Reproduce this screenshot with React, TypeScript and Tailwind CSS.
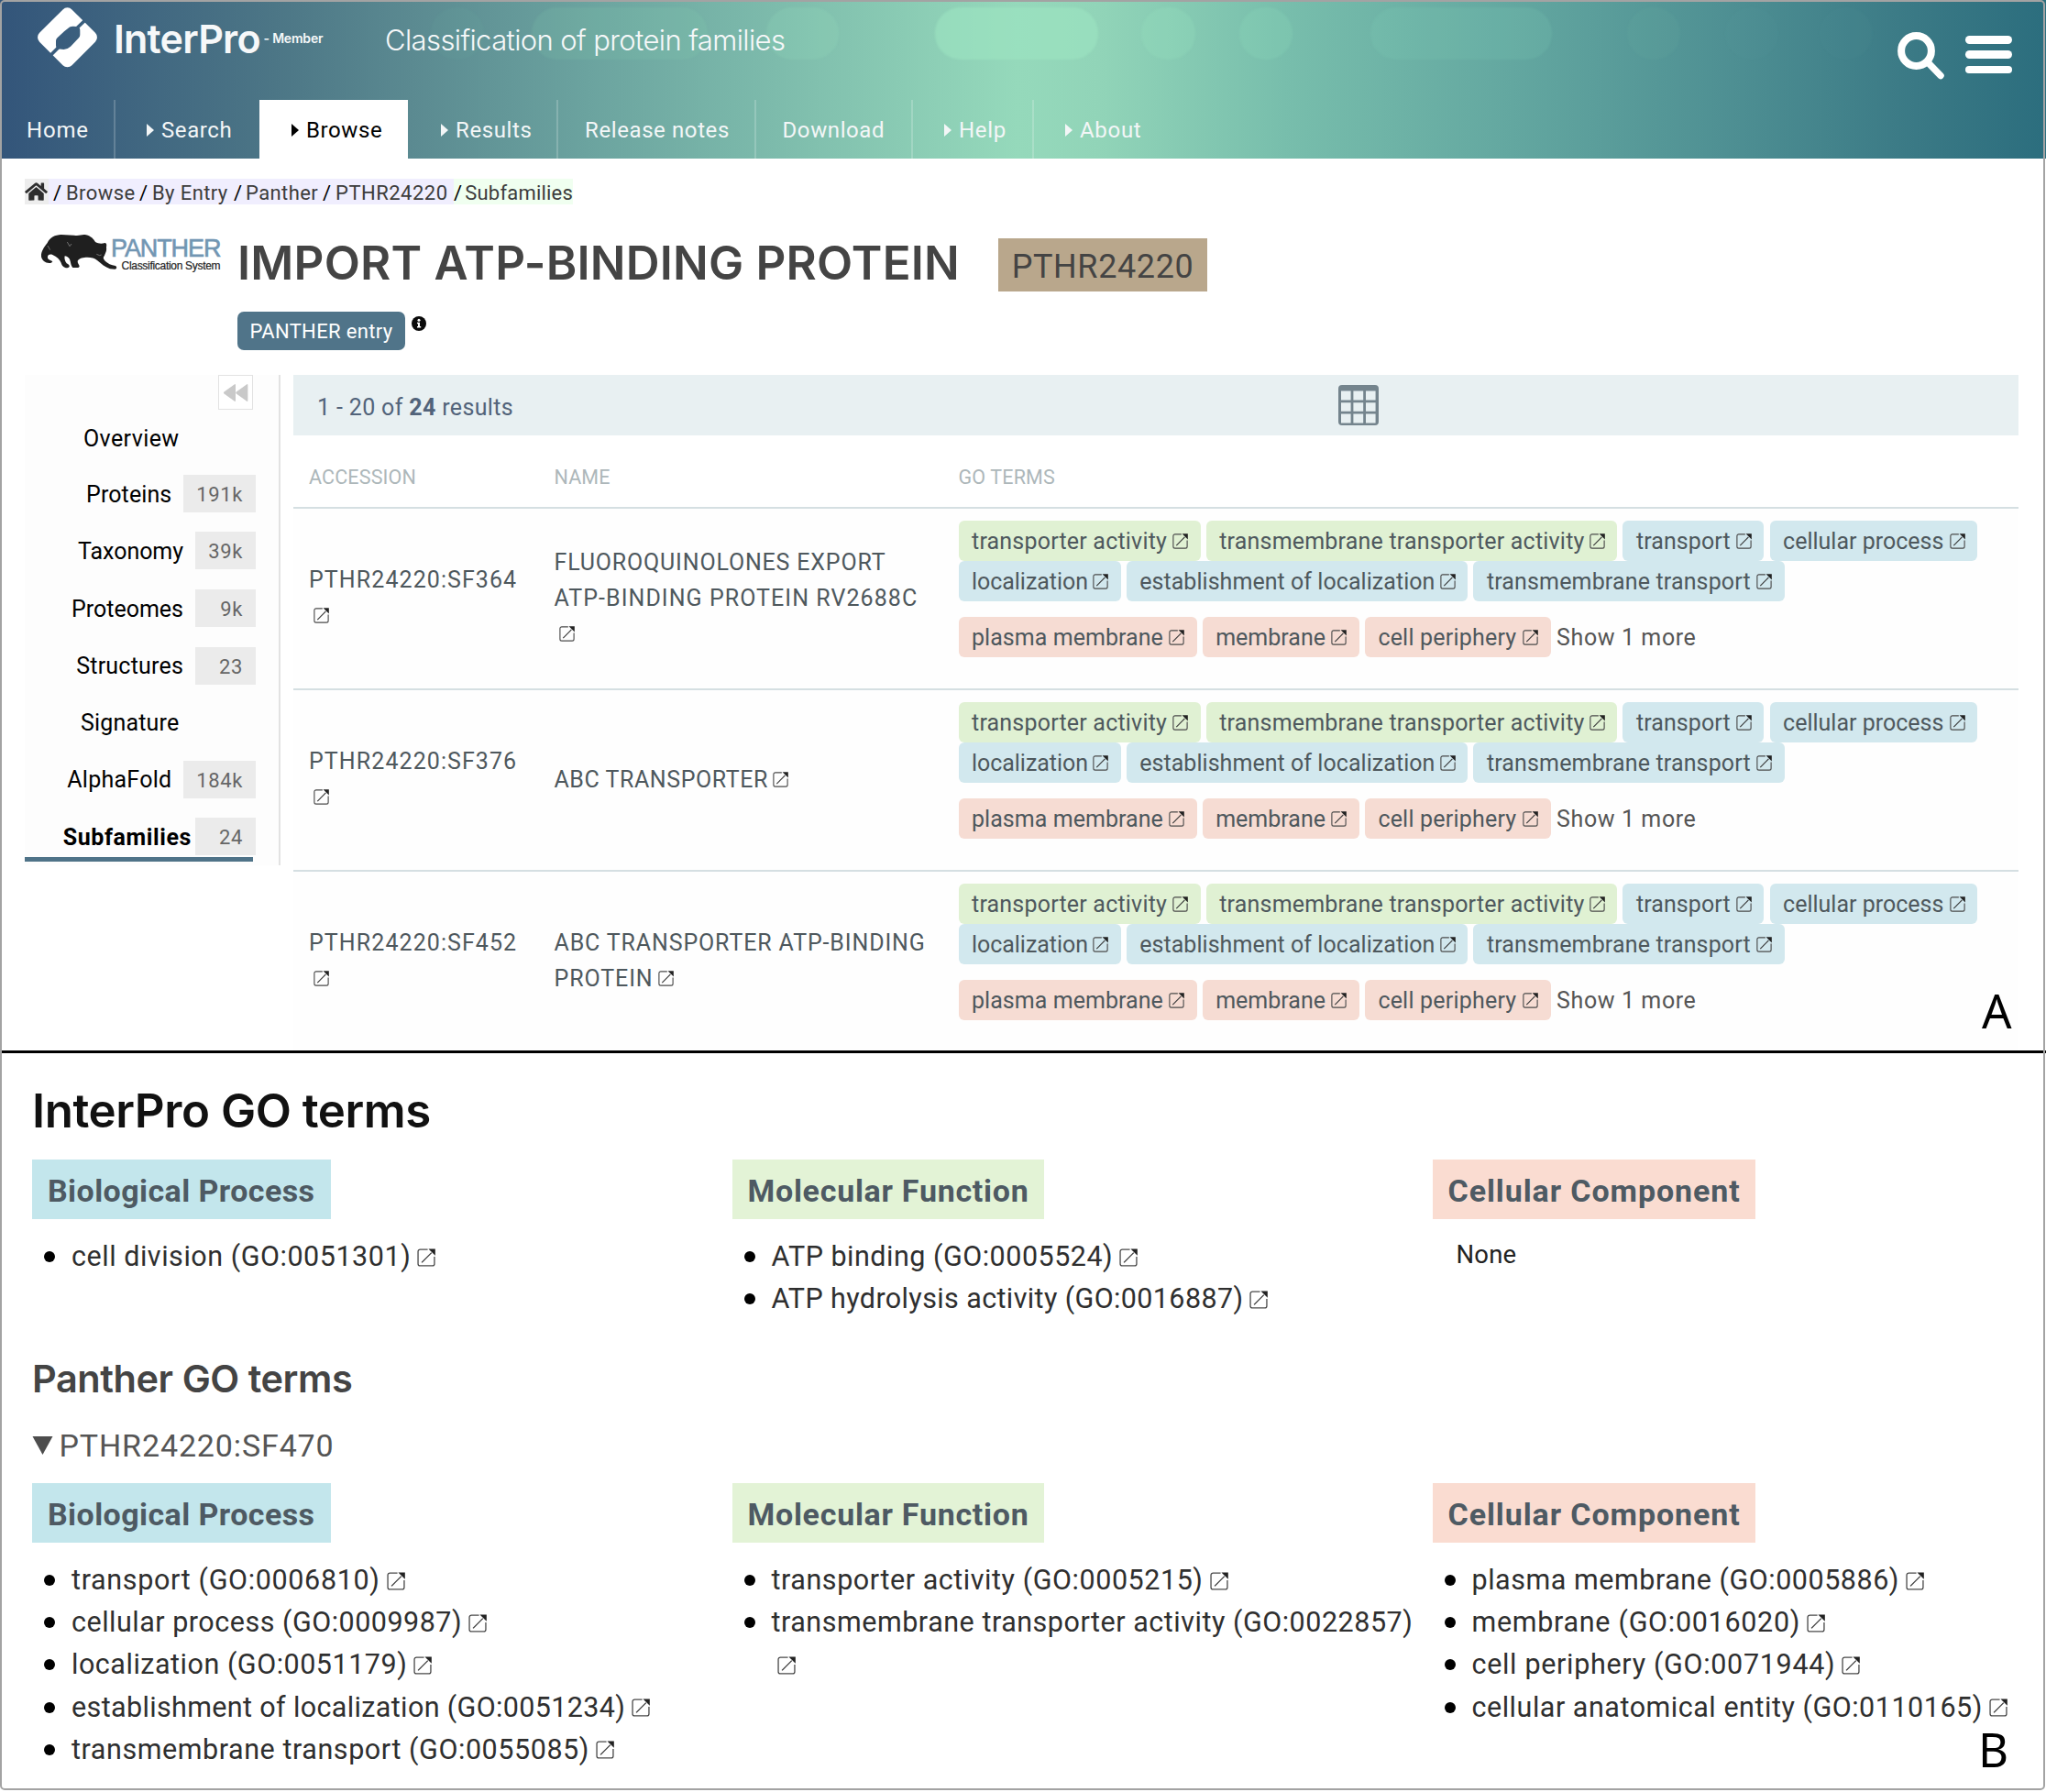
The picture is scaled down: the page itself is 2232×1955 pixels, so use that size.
import React from "react";

function ExternalIcon({ className }: { className: string }) {
  return (
    <svg viewBox="0 0 19 19" className={`inline-block shrink-0 ${className}`} fill="none">
      <path
        d="M11 1H3.2A2.2 2.2 0 0 0 1 3.2v12.6A2.2 2.2 0 0 0 3.2 18h12.6a2.2 2.2 0 0 0 2.2-2.2V8.5"
        stroke="#4a4a4a"
        strokeWidth="1.25"
      />
      <path d="M4.8 14.6 15 4.4" stroke="#3a3a3a" strokeWidth="1.3" />
      <path d="M11.8.4h7v7z" fill="#222" />
    </svg>
  );
}

function InterProLogo() {
  return (
    <svg viewBox="0 0 68 68" className="h-[68px] w-[68px] shrink-0">
      <mask id="logo-cut" maskUnits="userSpaceOnUse" x="0" y="0" width="68" height="68">
        <rect width="68" height="68" fill="white" />
        <path
          d="M30 27.3 36 22.6Q38 21.5 40 21.7L43.5 22.1Q47.3 22.5 47.3 26V31Q47.3 33 46 34.3L37 43.8Q33.5 47 29.5 47L25 46.6Q21 46.3 21 42.5V37.5Q21 35.5 22.5 34.2Z"
          fill="black"
        />
        <path d="M43.5 24 54.5 13.5M24 44.5 13.5 55" stroke="black" strokeWidth="3.6" />
      </mask>
      <g mask="url(#logo-cut)">
        <rect x="8.500" y="8.800" width="50" height="50" rx="7" transform="rotate(45 33.5 33.8)" fill="white" />
      </g>
    </svg>
  );
}

function PantherLogo() {
  return (
    <div className="flex h-[42px] w-[198px] items-start">
      <svg viewBox="72 195 252 117" className="h-[39px] w-[84px] shrink-0">
        <path
          d="M108 290C92 294 78 284 75 270C74 252 84 240 95 225C104 206 120 199 140 198L182 200C200 204 206 196 222 199C238 203 246 212 252 222C262 228 274 228 283 225C290 226 289 232 288 240C290 252 284 260 282 266C278 272 276 274 284 284C292 292 304 298 318 300C324 304 322 311 316 311L300 310C284 304 272 294 258 282C250 274 240 272 226 272C212 272 200 274 194 284C193 292 200 296 200 302C198 307 190 306 178 306C172 300 172 290 168 278C164 272 158 268 152 268C150 274 152 284 158 292C170 298 170 306 160 307C148 306 142 298 140 290C136 280 126 270 112 264C102 260 94 266 96 274C98 282 108 282 112 286Z"
          fill="#1f1f1f"
        />
        <path d="M160 222l8 14 6-8M96 234l8 14M256 262l10 4 6-2" stroke="#9a9a9a" strokeWidth="2" fill="none" />
      </svg>
      <div className="ml-[-7px] flex flex-col items-end whitespace-nowrap font-['Liberation_Sans'] leading-none">
        <span className="mt-[4px] text-[27px] leading-[25px] tracking-[-1.1px] text-[#7296b3] [-webkit-text-stroke:0.6px_#7296b3]">PANTHER</span>
        <span className="text-[12px] leading-[12px] tracking-[-0.3px] text-[#222] [-webkit-text-stroke:0.2px_#222]">Classification System</span>
      </div>
    </div>
  );
}

const PILLS = [
  "left-[470px] w-[58px] bg-[#7fd0b0]/[0.05]",
  "left-[580px] w-[192px] bg-[#8adcb8]/[0.12]",
  "left-[836px] w-[79px] bg-[#9ee8c2]/[0.16]",
  "left-[1020px] w-[178px] bg-[#9ce4c1]/60",
  "left-[1245px] w-[59px] bg-[#98e5c0]/25",
  "left-[1352px] w-[58px] bg-[#93e0be]/20",
  "left-[1495px] w-[198px] bg-[#84d5b8]/[0.16]",
  "left-[1775px] w-[58px] bg-[#7ccab0]/[0.07]",
  "left-[1882px] w-[58px] bg-[#7ccab0]/[0.03]",
  "left-[1985px] w-[58px] bg-[#7ccab0]/[0.03]",
];

const NAV: { label: string; arrow?: boolean; width: string; active?: boolean }[] = [
  { label: "Home", width: "w-[126px] pl-[29px] tracking-[0.8px]" },
  { label: "Search", arrow: true, width: "w-[157px] pl-[34px] tracking-[0.6px]" },
  { label: "Browse", arrow: true, width: "w-[162px] pl-[35px] tracking-[0.6px]", active: true },
  { label: "Results", arrow: true, width: "w-[164px] pl-[36px] tracking-[0.6px]" },
  { label: "Release notes", width: "w-[216px] pl-[29px] tracking-[0.6px]" },
  { label: "Download", width: "w-[171px] pl-[28.500px] tracking-[0.6px]" },
  { label: "Help", arrow: true, width: "w-[132px] pl-[34px] tracking-[0.7px]" },
  { label: "About", arrow: true, width: "w-[160px] pl-[34px] tracking-[0.7px]" },
];

function Header() {
  return (
    <header className="relative h-[173px] bg-[linear-gradient(90deg,#33557a_0px,#3f6580_140px,#4c7686_300px,#5b8a91_450px,#6ba39f_640px,#79b6a9_800px,#95d9bb_1110px,#91d4b8_1200px,#78beac_1400px,#63a7a0_1650px,#4d8e92_1900px,#3a7985_2090px,#2c6e7e_2228px)]">
      {PILLS.map((p) => (
        <span key={p} className={`absolute top-[8px] h-[57px] rounded-[28px] blur-[1px] ${p}`} />
      ))}
      <div className="relative flex h-[109px] items-start text-[#f6f8f9]">
        <div className="mt-[7px] ml-[40px]">
          <InterProLogo />
        </div>
        <span className="ml-[16px] mt-[12px] w-[162px] whitespace-nowrap font-['Inter'] text-[43px] leading-[60px] font-semibold tracking-[-0.8px]">InterPro</span>
        <span className="mt-[32px] ml-[1.500px] w-[132.500px] whitespace-nowrap font-['Inter'] text-[14px] leading-[20px] font-semibold tracking-[-0.2px]">- Member</span>
        <span className="mt-[24px] whitespace-nowrap font-['Inter'] text-[31px] leading-[40px] font-light tracking-[-0.61px]">Classification of protein families</span>
        <svg viewBox="0 0 52 52" className="absolute top-[35px] left-[2069.500px] h-[52px] w-[52px]" fill="none" stroke="white">
          <circle cx="20.5" cy="20.5" r="16.4" strokeWidth="8" />
          <path d="M33 33 47 47.5" strokeWidth="7.5" strokeLinecap="round" />
        </svg>
        <div className="absolute top-[39px] left-[2143.500px] flex w-[51px] flex-col gap-[7.5px]">
          <span className="h-[8.8px] rounded-full bg-white" />
          <span className="h-[8.8px] rounded-full bg-white" />
          <span className="h-[8.8px] rounded-full bg-white" />
        </div>
      </div>
      <nav className="relative flex h-[64px]">
        {NAV.map((n, i) => (
          <a
            key={n.label}
            className={`flex h-full items-center whitespace-nowrap pt-[2px] text-[24px] ${n.width} ${
              n.active ? "bg-white text-black" : "text-[#f3f6f7]"
            } ${i < NAV.length - 1 && !n.active && i !== 1 ? "border-r-2 border-white/20" : ""}`}
          >
            {n.arrow && (
              <svg viewBox="0 0 8 14" className="mr-[8px] h-[14px] w-[8px] fill-current">
                <path d="M0 0 8 7 0 14z" />
              </svg>
            )}
            {n.label}
          </a>
        ))}
      </nav>
    </header>
  );
}

function Slash() {
  return <span className="text-black">/</span>;
}

function Breadcrumb() {
  return (
    <div className="ml-[27px] mt-[22px] flex h-[28px] items-center whitespace-nowrap text-[22px] leading-[31px] tracking-[0.4px] text-[#3c3c3c]">
      <span className="flex h-full w-[26px] items-center bg-[#ededed]">
        <svg viewBox="0 0 576 512" className="h-[22px] w-[25px] fill-[#2e2e2e]">
          <path d="M280 148 96 300v164a16 16 0 0 0 16 16l112-.3a16 16 0 0 0 16-16V368a16 16 0 0 1 16-16h64a16 16 0 0 1 16 16v95.600a16 16 0 0 0 16 16.100L464 480a16 16 0 0 0 16-16V300L296 148a12 12 0 0 0-16 0zM571 251l-83-69V44a12 12 0 0 0-12-12h-56a12 12 0 0 0-12 12v72l-89-73a48 48 0 0 0-61 0L5 251a12 12 0 0 0-2 17l26 31a12 12 0 0 0 17 2L280 107a12 12 0 0 1 16 0l235 194a12 12 0 0 0 17-2l26-31a12 12 0 0 0-3-17z" />
        </svg>
      </span>
      <span className="flex h-full w-[442px] bg-[#f0eefe] pl-[5px]">
        <span className="w-[14px]"><Slash /></span>
        <span className="w-[80px]">Browse</span>
        <span className="w-[14px]"><Slash /></span>
        <span className="w-[89px]">By Entry</span>
        <span className="w-[13px]"><Slash /></span>
        <span className="w-[84px]">Panther</span>
        <span className="w-[14px]"><Slash /></span>
        <span className="tracking-[0.5px]">PTHR24220</span>
      </span>
      <span className="flex h-full w-[130px] bg-[#f0fff0]">
        <span className="w-[13px]"><Slash /></span>
        <span className="tracking-[0.2px]">Subfamilies</span>
      </span>
    </div>
  );
}

const MENU: { label: string; count?: string; row: string; text: string }[] = [
  { label: "Overview", row: "h-[61px] pr-[83.500px]", text: "tracking-[0.4px]" },
  { label: "Proteins", count: "191k", row: "h-[61px] gap-[13px]", text: "tracking-[0.1px]" },
  { label: "Taxonomy", count: "39k", row: "h-[63px] gap-[13px]", text: "tracking-[-0.05px]" },
  { label: "Proteomes", count: "9k", row: "h-[63px] gap-[13px]", text: "tracking-[0px]" },
  { label: "Structures", count: "23", row: "h-[62px] gap-[13px]", text: "tracking-[0.2px]" },
  { label: "Signature", row: "h-[62px] pr-[83.500px]", text: "tracking-[0.2px]" },
  { label: "AlphaFold", count: "184k", row: "h-[62px] gap-[13px]", text: "tracking-[0.25px]" },
  { label: "Subfamilies", count: "24", row: "h-[63px] gap-[4px]", text: "font-bold tracking-[0.6px]" },
];

function SideMenu() {
  return (
    <aside className="relative ml-[27px] h-[535px] w-[279px] border-r-2 border-[#e2e2e2] bg-[#fdfdfd] pr-[25px]">
      <div className="ml-[211px] flex h-[38px] w-[38px] items-center justify-center border-[1.5px] border-[#e2e2e2] bg-white">
        <svg viewBox="0 0 28 22" className="h-[21px] w-[28px] fill-[#c9c9c9]">
          <path d="M12.500 1.500Q14 0 14 2.500V19.500Q14 22 12.500 20.500L.8 12Q-.2 11 .8 10zM26.500 1.500Q28 0 28 2.500V19.500Q28 22 26.500 20.500L14.800 12Q13.800 11 14.800 10z" />
        </svg>
      </div>
      {MENU.map((m) => (
        <div key={m.label} className={`flex items-center justify-end whitespace-nowrap text-[25px] text-black ${m.row}`}>
          <span className={`pt-[1.500px] ${m.text}`}>{m.label}</span>
          {m.count && (
            <span className="flex h-[41px] min-w-[66px] items-center justify-end bg-[#ebebeb] px-[14px] pt-[2px] text-[22px] font-normal tracking-[0.6px] text-[#666]">{m.count}</span>
          )}
        </div>
      ))}
      <span className="absolute bottom-[4px] left-0 h-[5px] w-[249px] bg-[#4f7388]" />
    </aside>
  );
}

const CHIP_COLORS: Record<string, string> = {
  mf: "bg-[#e0f1d3]",
  bp: "bg-[#d2e8ee]",
  cc: "bg-[#f6dcd3]",
};

const TERMS: [string, string, string][][] = [
  [
    ["transporter activity", "mf", "w-[264px] tracking-[0.2px]"],
    ["transmembrane transporter activity", "mf", "w-[448.500px] tracking-[0.2px]"],
    ["transport", "bp", "w-[154px] tracking-[0.1px]"],
    ["cellular process", "bp", "w-[226.500px] tracking-[0px]"],
  ],
  [
    ["localization", "bp", "w-[177px] tracking-[-0.050px]"],
    ["establishment of localization", "bp", "w-[372.500px] tracking-[0.05px]"],
    ["transmembrane transport", "bp", "w-[339.500px] tracking-[0.15px]"],
  ],
  [
    ["plasma membrane", "cc", "w-[260px] tracking-[0.05px]"],
    ["membrane", "cc", "w-[171px] tracking-[0px]"],
    ["cell periphery", "cc", "w-[203px] tracking-[0.2px]"],
  ],
];

function GoChips() {
  return (
    <div className="flex flex-col">
      {TERMS.map((line, i) => (
        <div key={i} className={`flex h-[44px] items-center gap-[6.2px] ${i === 2 ? "mt-[17px]" : ""}`}>
          {line.map(([t, c, w]) => (
            <span key={t} className={`flex h-[44px] items-center justify-between rounded-[6px] pl-[14.500px] pr-[13.5px] pt-px whitespace-nowrap ${CHIP_COLORS[c]} ${w}`}>
              {t}
              <ExternalIcon className="h-[17px] w-[17px]" />
            </span>
          ))}
          {i === 2 && <span className="whitespace-nowrap pt-px tracking-[0.6px] text-[#555]">Show 1 more</span>}
        </div>
      ))}
    </div>
  );
}

const ROWS: { acc: string; name: [string, string][]; row: string }[] = [
  {
    acc: "PTHR24220:SF364",
    name: [["FLUOROQUINOLONES EXPORT", "tracking-[0.82px]"], ["ATP-BINDING PROTEIN RV2688C", "tracking-[1.05px]"], ["", ""]],
    row: "h-[198px] border-b-2 border-[#d5dfe2]",
  },
  { acc: "PTHR24220:SF376", name: [["ABC TRANSPORTER", "tracking-[0.55px]"]], row: "h-[198px] border-b-2 border-[#d5dfe2]" },
  {
    acc: "PTHR24220:SF452",
    name: [["ABC TRANSPORTER ATP-BINDING", "tracking-[0.86px]"], ["PROTEIN", "tracking-[0.9px]"]],
    row: "h-[195px]",
  },
];

function ResultsTable() {
  return (
    <div className="ml-[14px] w-[1882px]">
      <div className="flex h-[66px] items-center bg-[#e8f0f2] pl-[26px]">
        <span className="w-[1114px] pt-[5px] text-[25px] tracking-[0.35px] text-[#52637a]">
          1 - 20 of <b>24</b> results
        </span>
        <svg viewBox="0 0 44 44" className="mb-[1px] h-[44px] w-[44px]">
          <path
            fillRule="evenodd"
            d="M4 0H40Q44 0 44 4V40Q44 44 40 44H4Q0 44 0 40V4Q0 0 4 0ZM3 6.500V16.500H13.600V6.500ZM16.400 6.500V16.500H27.200V6.500ZM30 6.500V16.500H40.600V6.500ZM3 19.200V28.800H13.600V19.200ZM16.400 19.200V28.800H27.200V19.200ZM30 19.200V28.800H40.600V19.200ZM3 31.400V41.500H13.600V31.400ZM16.400 31.400V41.500H27.200V31.400ZM30 31.400V41.500H40.600V31.400Z"
            fill="#74848d"
          />
        </svg>
      </div>
      <div className="grid h-[80px] grid-cols-[267.500px_441px_1fr] items-center border-b-2 border-[#d5dfe2] pl-[17px] pt-[14px] text-[21.500px] tracking-[0.15px] text-[#adb7ba]">
        <span>ACCESSION</span>
        <span>NAME</span>
        <span>GO TERMS</span>
      </div>
      {ROWS.map((r) => (
        <div
          key={r.acc}
          className={`grid grid-cols-[267.500px_441px_1fr] items-center bg-[#fefefe] pl-[17px] text-[25px] leading-[39px] text-[#4e585d] ${r.row}`}
        >
          <div className="flex flex-col pb-[2px] tracking-[1.08px]">
            <span>{r.acc}</span>
            <span className="flex h-[39px] items-center pl-[5px]">
              <ExternalIcon className="h-[17px] w-[17px]" />
            </span>
          </div>
          <div className="flex flex-col pb-[2px]">
            {r.name.map(([n, t], j) => (
              <span key={j} className={`flex h-[39px] items-center whitespace-nowrap ${t}`}>
                {n}
                {j === r.name.length - 1 && <ExternalIcon className="ml-[5px] h-[17px] w-[17px]" />}
              </span>
            ))}
          </div>
          <div className="self-start pt-[13px]">
            <GoChips />
          </div>
        </div>
      ))}
    </div>
  );
}

function EntryPanel() {
  return (
    <section className="relative h-[1146px]">
      <Header />
      <Breadcrumb />
      <div className="flex pt-[32px]">
        <div className="ml-[44px] w-[215px]">
          <PantherLogo />
        </div>
        <div>
          <div className="flex h-[63px] items-start">
            <h1 className="w-[830px] whitespace-nowrap pt-[2px] font-['Inter'] text-[51px] leading-[60px] font-semibold tracking-[0.2px] text-[#444]">IMPORT ATP-BINDING PROTEIN</h1>
            <span className="mt-[5px] flex h-[58px] w-[228px] items-center justify-center bg-[#b9a78c] pt-[4px] text-[36px] tracking-[0.6px] text-[#444]">PTHR24220</span>
          </div>
          <div className="mt-[22px] flex h-[42px] items-start">
            <span className="flex h-[42px] w-[183px] items-center justify-center rounded-[7px] bg-[#507489] pt-px text-[22px] tracking-[0.35px] text-white">PANTHER entry</span>
            <svg viewBox="0 0 16 16" className="ml-[7px] mt-[4.500px] h-[16px] w-[16px]">
              <circle cx="8" cy="8" r="8" fill="#0a0a0a" />
              <circle cx="8" cy="4.2" r="1.5" fill="white" />
              <path d="M6 6.800H9V11H10.200V12.500H6V11H7V8.200H6Z" fill="white" />
            </svg>
          </div>
        </div>
      </div>
      <div className="mt-[27px] flex">
        <SideMenu />
        <ResultsTable />
      </div>
      <span className="absolute left-[2162px] top-[1068px] font-['Noto_Sans'] text-[51px] leading-[68px] text-black">A</span>
    </section>
  );
}

type Term = { text: string; track?: string; wrap?: boolean };

function GoColumns({ bp, mf, cc, height }: { bp: Term[]; mf: Term[]; cc: Term[]; height: string }) {
  const cols = [
    { title: "Biological Process", box: "w-[326px] bg-[#c3e6ec] tracking-[0.42px]", terms: bp },
    { title: "Molecular Function", box: "w-[340px] bg-[#e3f3d6] tracking-[0.72px]", terms: mf },
    { title: "Cellular Component", box: "w-[352px] bg-[#fadcd1] tracking-[0.9px]", terms: cc },
  ];
  return (
    <div className={`grid grid-cols-[763.500px_764px_1fr] ${height}`}>
      {cols.map((c) => (
        <div key={c.title}>
          <div className={`flex h-[65px] items-center whitespace-nowrap pl-[17px] pt-[3px] text-[34px] font-bold text-[#4e5a63] ${c.box}`}>{c.title}</div>
          {c.terms.length === 0 ? (
            <div className="pl-[26px] pt-[16px] text-[27.500px] leading-[46px] tracking-[0.2px] text-[#222]">None</div>
          ) : (
            <ul className="pt-[18px] text-[30.500px] leading-[46.200px] text-[#2f2f2f]">
              {c.terms.map((t) => (
                <li key={t.text} className="flex whitespace-nowrap">
                  <span className="mr-[18px] ml-[13px] mt-[17px] h-[12px] w-[12px] shrink-0 rounded-full bg-black" />
                  <span className={`flex ${t.wrap ? "flex-col" : "items-center"}`}>
                    <span className={t.track ?? "tracking-[0.5px]"}>{t.text}</span>
                    <span className={`flex h-[46px] items-center ${t.wrap ? "pl-[6px]" : "pl-[7px]"} pt-px`}>
                      <ExternalIcon className="h-[20px] w-[20px]" />
                    </span>
                  </span>
                </li>
              ))}
            </ul>
          )}
        </div>
      ))}
    </div>
  );
}

function GoTermsPanel() {
  return (
    <section className="relative h-[805px] pl-[35px]">
      <h2 className="pt-[32.500px] font-['Inter'] text-[51px] leading-[60px] font-semibold tracking-[-0.45px] text-[#111]">InterPro GO terms</h2>
      <div className="pt-[23.500px]">
        <GoColumns
          height="h-[209px]"
          bp={[{ text: "cell division (GO:0051301)", track: "tracking-[0.53px]" }]}
          mf={[{ text: "ATP binding (GO:0005524)" }, { text: "ATP hydrolysis activity (GO:0016887)", track: "tracking-[0.38px]" }]}
          cc={[]}
        />
      </div>
      <h3 className="font-['Inter'] text-[41.500px] leading-[60px] font-semibold tracking-[-0.45px] text-[#444]">Panther GO terms</h3>
      <div className="mt-[23px] flex h-[40px] items-center text-[34px] tracking-[0.87px] text-[#555]">
        <svg viewBox="0 0 22 20" className="mr-[6.500px] h-[20px] w-[23px] fill-[#4d4d4d]">
          <path d="M0 0H22L11 20Z" />
        </svg>
        PTHR24220:SF470
      </div>
      <div className="pt-[21px]">
        <GoColumns
          height="h-[320px]"
          bp={[
            { text: "transport (GO:0006810)", track: "tracking-[0.65px]" },
            { text: "cellular process (GO:0009987)", track: "tracking-[0.5px]" },
            { text: "localization (GO:0051179)", track: "tracking-[0.52px]" },
            { text: "establishment of localization (GO:0051234)", track: "tracking-[0.36px]" },
            { text: "transmembrane transport (GO:0055085)", track: "tracking-[0.56px]" },
          ]}
          mf={[{ text: "transporter activity (GO:0005215)", track: "tracking-[0.55px]" }, { text: "transmembrane transporter activity (GO:0022857)", track: "tracking-[0.52px]", wrap: true }]}
          cc={[
            { text: "plasma membrane (GO:0005886)", track: "tracking-[0.53px]" },
            { text: "membrane (GO:0016020)", track: "tracking-[0.7px]" },
            { text: "cell periphery (GO:0071944)", track: "tracking-[0.68px]" },
            { text: "cellular anatomical entity (GO:0110165)", track: "tracking-[0.52px]" },
          ]}
        />
      </div>
      <span className="absolute left-[2158px] top-[725px] font-['Noto_Sans'] text-[51px] leading-[68px] text-black">B</span>
    </section>
  );
}

export default function App() {
  return (
    <div className="relative h-[1955px] w-[2232px] overflow-hidden bg-white font-['Roboto',sans-serif]">
      <EntryPanel />
      <div className="relative h-[3px] bg-black" />
      <GoTermsPanel />
      <div className="pointer-events-none absolute top-0 left-0 h-[1953px] w-[2231px] rounded-[5px] border-2 border-[#a3a3a3]" />
    </div>
  );
}
